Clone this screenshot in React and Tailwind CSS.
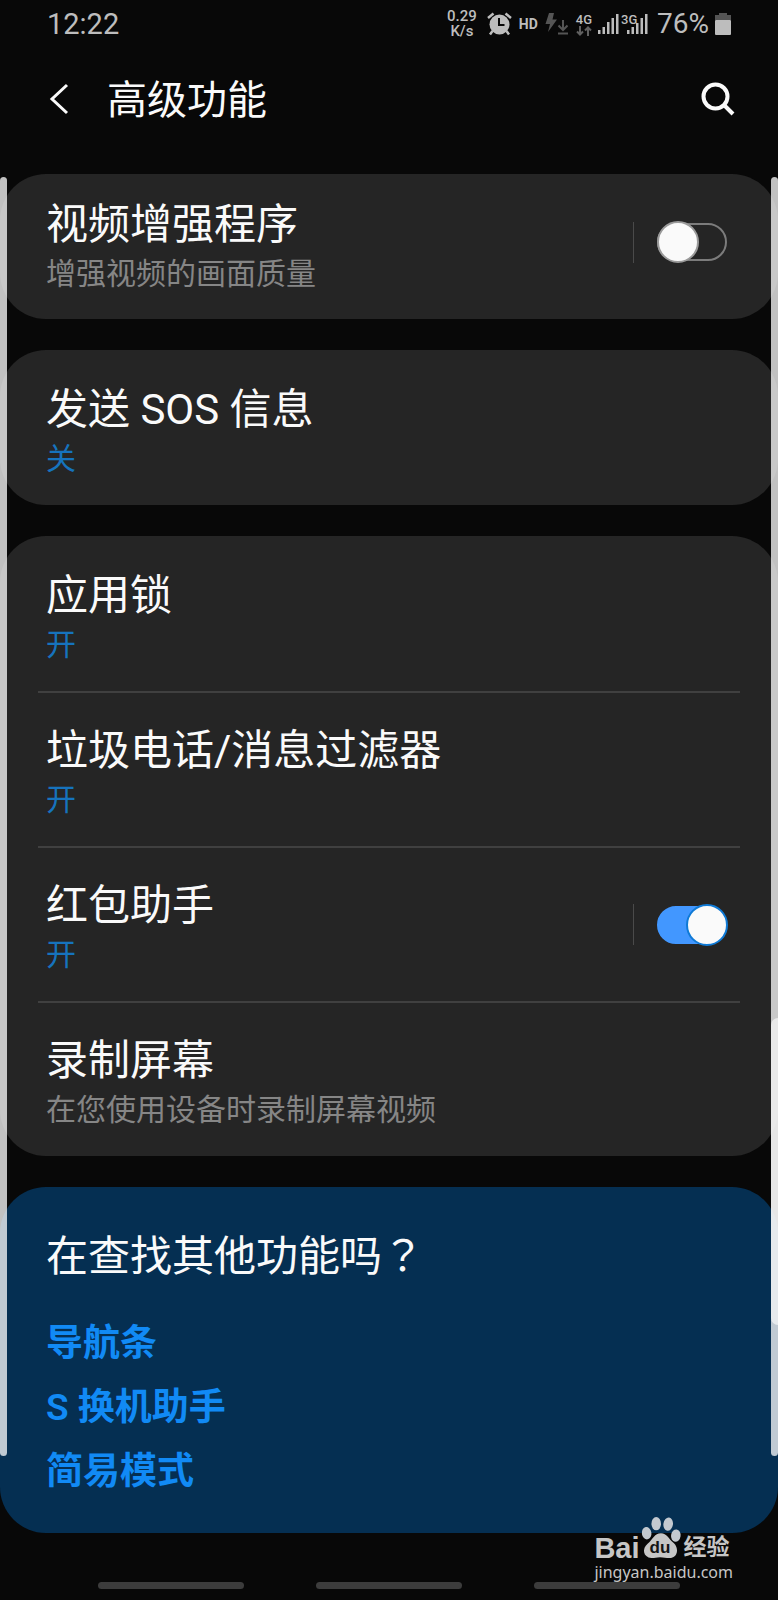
import { useState, useCallback } from "react";

const LOCK_ITEMS = [
  { id: "app-lock", title: "应用锁", status: "开" },
  { id: "spam-filter", title: "垃圾电话/消息过滤器", status: "开" },
  { id: "red-packet", title: "红包助手", status: "开", hasSwitch: true },
  { id: "screen-record", title: "录制屏幕", description: "在您使用设备时录制屏幕视频" },
];

const RELATED_LINKS = ["导航条", "S 换机助手", "简易模式"];


export default function App(){
    const [switches, setSwitches] = useState({ "video-enhancer": false, "red-packet": true });

    const toggleSwitch = useCallback(function (id) {
      setSwitches(function(prev){
        return { ...prev, [id]: !prev[id] };
      });
    }, []);

    return (
      <div className="relative flex flex-col min-h-screen overflow-hidden bg-[#080808] text-[#fafafa] font-['Roboto','Noto_Sans_CJK_SC',sans-serif]">
        <StatusBar />
        <Header title="高级功能" />
        <main className="flex flex-col gap-[31px]">
          <Card className="bg-[#252525] pb-[9px]">
            <SettingRow
              item={{ id: "video-enhancer", title: "视频增强程序", description: "增强视频的画面质量", hasSwitch: true }}
              padding="pt-[22px] pb-4"
              checked={switches["video-enhancer"]}
              onToggle={toggleSwitch}
            />
          </Card>
          <Card className="bg-[#252525]">
            <SettingRow item={{ id: "sos", title: "发送 SOS 信息", status: "关" }} padding="pt-[31px] pb-[26px]" />
          </Card>
          <Card className="bg-[#252525]">
            {LOCK_ITEMS.map(function(item, index){
              return (
                <div key={item.id}>
                  {index > 0 ? <div className="h-0.5 mx-[38px] bg-[#404040]" /> : ''}
                  <SettingRow
                    item={item}
                    padding={index > 0 ? "pt-[29px] pb-[26px]" : "pt-[31px] pb-[26px]"}
                    checked={switches[item.id]}
                    onToggle={toggleSwitch}
                  />
                </div>
              );
            })}
          </Card>
          <Card className="bg-[#052f52] px-[46px] pt-10 pb-[29px]">
            <h2 className="text-[42px] leading-[60px]">
              在查找其他功能吗<span className="leading-none font-['Noto_Sans_CJK_TC',sans-serif]" lang="zh-TW">？</span>
            </h2>
            <nav className="flex flex-col items-start mt-[25px]">
              {RELATED_LINKS.map(function(label){
                return (
                  <a key={label} href="#" className="text-[37px] leading-[64px] font-semibold text-[#118af5]">{label}</a>
                );
              })}
            </nav>
          </Card>
        </main>
        <div className="flex justify-center gap-[72px] mt-[49px] mb-[11px]">
          <span className="w-[146px] h-[7px] rounded-full bg-[#3c3c3c]" />
          <span className="w-[146px] h-[7px] rounded-full bg-[#3c3c3c]" />
          <span className="w-[146px] h-[7px] rounded-full bg-[#3c3c3c]" />
        </div>

        {/* edge handles and scroll thumb float over the list */}
        <div className="absolute left-0 top-[177px] bottom-[144px] w-[7px] rounded-full bg-white/75" />
        <div className="absolute right-0 top-[177px] bottom-[144px] w-[7px] rounded-full bg-white/75" />
        <div className="absolute right-0 top-[1018px] h-[307px] w-[7px] rounded-l-full bg-white/60" />
        <Watermark />
      </div>
    )
}


function Card({className, children}) {
  return <section className={"flex flex-col rounded-[46px] " + className}>{children}</section>;
}


function SettingRow({item, padding, checked, onToggle}) {
  return (
    <div className="flex items-center pl-[46px] pr-[51px]">
      <button type="button" className={"flex flex-col grow text-left " + padding}>
        <span id={item.id + "-title"} className="text-[42px] leading-[58px]">{item.title}</span>
        {item.status ? <span className="text-[30px] leading-10 text-[#1673bd]">{item.status}</span> : ''}
        {item.description ? <span className="text-[30px] leading-10 text-[#868686]">{item.description}</span> : ''}
      </button>
      {item.hasSwitch ? (
        <div className="flex items-center gap-[23px]">
          <span className="w-px h-[41px] bg-[#4a4a4a]" />
          <input
            type="checkbox"
            role="switch"
            aria-labelledby={item.id + "-title"}
            checked={checked}
            onChange={function(){ onToggle(item.id) }}
            className="relative appearance-none w-[70px] h-[38px] rounded-full border-2 border-[#7c7c7c] checked:border-[#4297ff] checked:bg-[#4297ff] before:absolute before:-top-[4px] before:-left-[2px] before:size-[42px] before:rounded-full before:border-2 before:border-[#9a9a9a] before:bg-[#fafafa] checked:before:left-[27px] checked:before:border-[#0f7ad6]"
          />
        </div>
      ) : ''}
    </div>
  );
}


function Header({title}) {
  return (
    <header className="flex items-center h-[102px] mb-6 pl-[48px] pr-[43px]">
      <button type="button" aria-label="返回" className="w-[59px]">
        <svg width="22" height="32" viewBox="0 0 22 32" fill="none" stroke="currentColor" strokeWidth="3">
          <path d="M19 2 L4 16 L19 30" />
        </svg>
      </button>
      <h1 className="grow pt-1 text-[40px] leading-[60px]">{title}</h1>
      <button type="button" aria-label="搜索">
        <svg width="34" height="34" viewBox="0 0 34 34" fill="none" stroke="currentColor" strokeWidth="4">
          <circle cx="14.500" cy="14.500" r="12" />
          <path d="M23 23 L32 32" />
        </svg>
      </button>
    </header>
  );
}


function StatusBar() {
  return (
    <div className="flex items-center justify-between h-12 px-[47px] text-[#bdbdbd]">
      <span className="text-[29px] leading-8">12:22</span>
      <div className="flex items-center">
        <div className="flex flex-col items-center mr-[10px] text-[15px] leading-[15px] font-medium">
          <span>0.29</span>
          <span>K/s</span>
        </div>
        <svg className="mr-[7px]" width="25" height="24" viewBox="0 0 25 24">
          <circle cx="12.500" cy="12.500" r="10" fill="#bdbdbd" />
          <path d="M1 6 L6.500 1.500 M24 6 L18.500 1.500 M5.500 19 L3 22.500 M19.500 19 L22 22.500" stroke="#bdbdbd" strokeWidth="2.500" />
          <path d="M12 6 V13 H17.500" fill="none" stroke="#080808" strokeWidth="2" />
        </svg>
        <span className="mr-[7px] text-[14px] leading-4 font-bold">HD</span>
        <svg className="mr-2" width="23" height="24" viewBox="0 0 23 24">
          <path d="M4 1 H9 L7.500 7.500 H12 L3 20 L5 12 H0.500 Z" fill="#555555" />
          <path d="M18 8 V18 M13.500 13.500 L18 18 L22.500 13.500 M13 21.500 H23" fill="none" stroke="#555555" strokeWidth="2" />
        </svg>
        <div className="flex flex-col items-center mr-[6px] text-[13px] leading-[13px] font-medium">
          <span>4G</span>
          <svg width="16" height="10" viewBox="0 0 16 10" fill="none" stroke="#606060" strokeWidth="2">
            <path d="M4 0 V9 M1 5.500 L4 8.500 L7 5.500 M12 10 V1 M9 4.500 L12 1.500 L15 4.500" />
          </svg>
        </div>
        <SignalBars heights={[4, 7, 12, 16, 20]} />
        <div className="relative ml-2 mr-[9px]">
          <SignalBars heights={[4, 7, 11, 16, 20]} />
          <span className="absolute top-0 -left-[6px] text-[13px] leading-[13px] font-medium">3G</span>
        </div>
        <span className="mr-[6px] text-[28px] leading-8">76%</span>
        <svg width="16" height="24" viewBox="0 0 16 24">
          <path d="M4 1 H12 V3 H16 V8 H0 V3 H4 Z" fill="#555555" />
          <rect x="0" y="8" width="16" height="15" rx="1" fill="#bdbdbd" />
        </svg>
      </div>
    </div>
  );
}


function SignalBars({heights}) {
  return (
    <svg width="21" height="22" viewBox="0 0 21 22" fill="#bdbdbd">
      {heights.map(function(h, i){
        return <rect key={i} x={i * 4.5} y={21 - h} width="2.500" height={h} />;
      })}
    </svg>
  );
}


function Watermark() {
  return (
    <div className="absolute right-[45px] bottom-4 flex flex-col items-start text-[#c6c6c6]">
      <div className="flex items-end">
        <span className="text-[29px] leading-6 font-bold font-['Liberation_Sans',sans-serif]">Bai</span>
        <div className="relative">
          <svg width="42" height="44" viewBox="0 0 42 46">
            <g fill="#c3c9d0">
              <ellipse cx="6" cy="18" rx="5" ry="6.500" transform="rotate(-8 6 18)" />
              <ellipse cx="16" cy="8" rx="5" ry="7" />
              <ellipse cx="28.500" cy="8.500" rx="5" ry="7" transform="rotate(8 28.500 8.500)" />
              <ellipse cx="36.500" cy="20.500" rx="5" ry="6.500" transform="rotate(8 36.500 20.500)" />
            </g>
            <path fill="#c6c6c6" d="M21 18 C27 18 29 24 34 28 C40 33 39 44 30 44 C26 44 24 43 20 43 C16 43 15 44 11 44 C2 43 1 34 7 29 C13 24 14 18 21 18 Z" />
          </svg>
          <span className="absolute left-[10px] top-[22px] text-[17px] leading-5 font-bold text-[#141414] font-['Liberation_Sans',sans-serif]">du</span>
        </div>
        <span className="ml-0.5 text-[23px] leading-6 font-bold">经验</span>
      </div>
      <span className="text-[16px] leading-6 font-['Noto_Sans',sans-serif]">jingyan.baidu.com</span>
    </div>
  );
}
